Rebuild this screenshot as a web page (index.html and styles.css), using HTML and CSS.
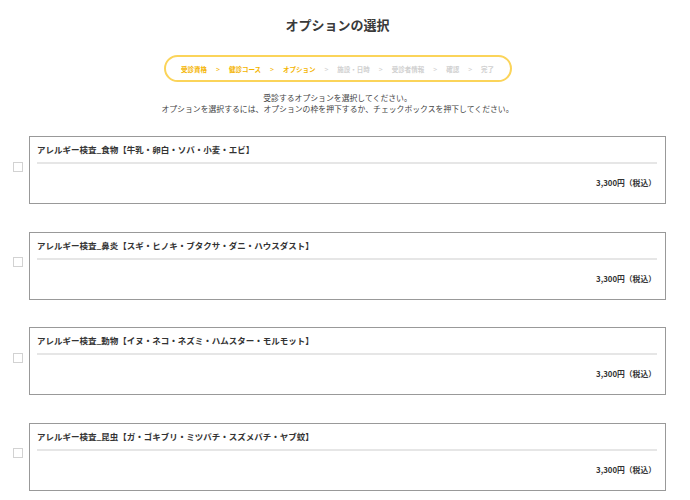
FILE: index.html
```html
<!DOCTYPE html>
<html lang="ja">
<head>
<meta charset="utf-8">
<title>オプションの選択</title>
<link rel="stylesheet" href="styles.css">
</head>
<body>
<div class="page">
  <h1 class="title">オプションの選択</h1>
  <div class="stepper-wrap">
    <div class="stepper">
      <span class="step done">受診資格</span><span class="arrow done">&gt;</span>
      <span class="step done">健診コース</span><span class="arrow done">&gt;</span>
      <span class="step done">オプション</span><span class="arrow">&gt;</span>
      <span class="step">施設・日時</span><span class="arrow">&gt;</span>
      <span class="step">受診者情報</span><span class="arrow">&gt;</span>
      <span class="step">確認</span><span class="arrow">&gt;</span>
      <span class="step">完了</span>
    </div>
  </div>
  <p class="desc">受診するオプションを選択してください。<br>オプションを選択するには、オプションの枠を押下するか、チェックボックスを押下してください。</p>
  <div class="list">
    <div class="row">
      <span class="check"></span>
      <div class="card">
        <div class="card-title">アレルギー検査_食物【牛乳・卵白・ソバ・小麦・エビ】</div>
        <div class="divider"></div>
        <div class="price">3,300円（税込）</div>
      </div>
    </div>
    <div class="row">
      <span class="check"></span>
      <div class="card">
        <div class="card-title">アレルギー検査_鼻炎【スギ・ヒノキ・ブタクサ・ダニ・ハウスダスト】</div>
        <div class="divider"></div>
        <div class="price">3,300円（税込）</div>
      </div>
    </div>
    <div class="row">
      <span class="check"></span>
      <div class="card">
        <div class="card-title">アレルギー検査_動物【イヌ・ネコ・ネズミ・ハムスター・モルモット】</div>
        <div class="divider"></div>
        <div class="price">3,300円（税込）</div>
      </div>
    </div>
    <div class="row">
      <span class="check"></span>
      <div class="card">
        <div class="card-title">アレルギー検査_昆虫【ガ・ゴキブリ・ミツバチ・スズメバチ・ヤブ蚊】</div>
        <div class="divider"></div>
        <div class="price">3,300円（税込）</div>
      </div>
    </div>
  </div>
</div>
</body>
</html>
```
FILE: styles.css
```css
html, body {
  margin: 0;
  padding: 0;
  background: #fff;
}
body {
  font-family: "Noto Sans CJK JP", "Noto Sans", sans-serif;
  color: #333;
}
.page {
  width: 675px;
  padding-top: 17px;
}
.title {
  margin: 0;
  font-size: 13px;
  line-height: 16px;
  font-weight: bold;
  text-align: center;
  color: #3a3a3a;
}
.stepper-wrap {
  display: flex;
  justify-content: center;
  margin-top: 22px;
}
.stepper {
  box-sizing: border-box;
  width: 348px;
  height: 27px;
  border: 2px solid #fbd45a;
  border-radius: 14px;
  display: flex;
  align-items: center;
  justify-content: center;
  gap: 9px;
  font-size: 6.5px;
  font-weight: bold;
  color: #d0d0d0;
}
.stepper .done {
  color: #f4b400;
}
.arrow {
  font-size: 7px;
  font-weight: normal;
}
.desc {
  margin: 10px 0 0;
  font-size: 7.85px;
  line-height: 11px;
  text-align: center;
  color: #444;
}
.list {
  margin-top: 22px;
  display: flex;
  flex-direction: column;
  gap: 27.6px;
}
.row {
  display: flex;
  align-items: center;
  padding-left: 13px;
}
.check {
  box-sizing: border-box;
  width: 10px;
  height: 10px;
  border: 1px solid #d2d2d2;
  background: #fff;
  margin-right: 6px;
  margin-top: -7px;
}
.card {
  box-sizing: border-box;
  width: 637px;
  height: 68px;
  border: 1px solid #999;
  padding: 7px 8px 0 7px;
}
.card-title {
  font-size: 8.5px;
  line-height: 11px;
  font-weight: bold;
  color: #333;
}
.divider {
  height: 2px;
  background: #e6e6e6;
  margin-top: 7px;
}
.price {
  margin-top: 13px;
  padding-right: 1px;
  text-align: right;
  font-size: 7.8px;
  line-height: 11px;
  font-weight: bold;
  color: #333;
}
```
